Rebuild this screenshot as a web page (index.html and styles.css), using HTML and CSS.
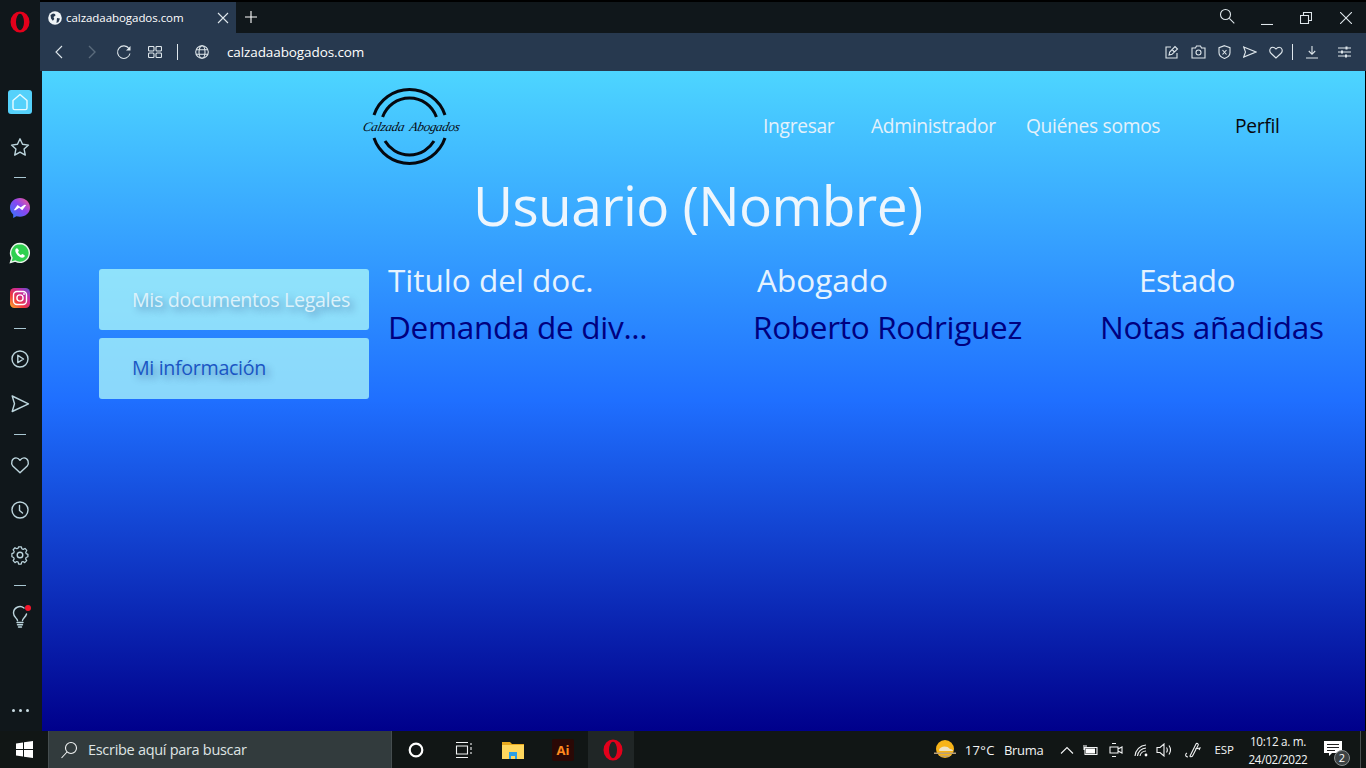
FILE: index.html
```html
<!DOCTYPE html>
<html lang="es">
<head>
<meta charset="utf-8">
<title>calzadaabogados.com</title>
<link rel="stylesheet" href="styles.css">
</head>
<body>
<div class="desktop">
  <div class="browser">
    <aside class="sidebar">
      <div class="side-opera">
        <svg width="20" height="22" viewBox="0 0 20 22"><path fill="#e3001b" fill-rule="evenodd" d="M10 .5a9.500 10.500 0 1 0 0 21 9.500 10.500 0 1 0 0-21zM10 2.700a4 8.300 0 1 1 0 16.600 4 8.300 0 1 1 0-16.600z"/></svg>
      </div>
      <div class="side-item"><span class="home-box"><svg width="20" height="20" viewBox="0 0 20 20"><path class="ln" d="M3 8.500 10 2.500l7 6V16a1.600 1.600 0 0 1-1.600 1.600H4.600A1.600 1.600 0 0 1 3 16z"/></svg></span></div>
      <div class="side-item"><svg width="20" height="20" viewBox="0 0 20 20"><path class="ln" d="M10 1.800 12.500 7.300l6 .8-4.400 4 1.200 6L10 15.100l-5.300 3 1.200-6-4.400-4 6-.8z"/></svg></div>
      <div class="side-dash"></div>
      <div class="side-item"><svg width="22" height="22" viewBox="0 0 22 22"><defs><linearGradient id="ms" x1="0" y1="1" x2="1" y2="0"><stop offset="0" stop-color="#2b7bff"/><stop offset=".55" stop-color="#8a46f0"/><stop offset="1" stop-color="#ff5a8a"/></linearGradient></defs><path fill="url(#ms)" d="M11 1C5.400 1 1 5.100 1 10.500c0 2.900 1.200 5.300 3.200 7V21l3.200-1.800c1.100.3 2.300.5 3.600.5 5.600 0 10-4 10-9.200S16.600 1 11 1z"/><path fill="#fff" d="m4.800 13.300 3.700-5.400 3.200 2.400 3.700-2.500 1.800.1-3.900 5.300-3.200-2.400-3.600 2.500z"/></svg></div>
      <div class="side-item"><svg width="22" height="22" viewBox="0 0 22 22"><path fill="#2fd04f" stroke="#e8f4ea" stroke-width="1.400" d="M11 1.500a9.400 9.400 0 0 0-8 14.300L1.500 20.500l4.800-1.400A9.400 9.400 0 1 0 11 1.500z"/><path fill="#fff" d="M7.800 6.200c-.5 0-1.500.8-1.500 2.300 0 3 3.900 7.200 7 7.200 1.500 0 2.500-1 2.500-1.900 0-.6-2-1.700-2.500-1.700-.5 0-.8 1-1.300 1-.9 0-3-2.100-3-3 0-.5.900-.8.900-1.300 0-.5-1.200-2.600-2.100-2.600z"/></svg></div>
      <div class="side-item"><svg width="20" height="20" viewBox="0 0 20 20"><defs><linearGradient id="ig" x1="0" y1="1" x2="1" y2="0"><stop offset="0" stop-color="#fdb52d"/><stop offset=".35" stop-color="#f0383f"/><stop offset=".7" stop-color="#c32aa3"/><stop offset="1" stop-color="#4f5bd5"/></linearGradient></defs><rect width="20" height="20" rx="4.500" fill="url(#ig)"/><rect x="3.500" y="3.500" width="13" height="13" rx="3.500" fill="none" stroke="#fff" stroke-width="1.400"/><circle cx="10" cy="10" r="3.100" fill="none" stroke="#fff" stroke-width="1.400"/><circle cx="14" cy="6" r=".9" fill="#fff"/></svg></div>
      <div class="side-dash"></div>
      <div class="side-item"><svg width="20" height="20" viewBox="0 0 20 20"><circle class="ln" cx="10" cy="10" r="8"/><path class="ln" d="m7.800 6.300 5.700 3.700-5.700 3.700z"/></svg></div>
      <div class="side-item"><svg width="20" height="20" viewBox="0 0 20 20"><path class="ln" d="M2.200 2 18.500 9.800 2.200 17.500l2.300-7.700z"/></svg></div>
      <div class="side-dash"></div>
      <div class="side-item"><svg width="20" height="20" viewBox="0 0 20 20"><path class="ln" d="M10 17.800 2.800 11C.6 8.500 1.700 2.900 6 2.900c1.800 0 3 1 4 2.300 1-1.300 2.200-2.300 4-2.300 4.300 0 5.400 5.600 3.200 8.100z"/></svg></div>
      <div class="side-item"><svg width="20" height="20" viewBox="0 0 20 20"><circle class="ln" cx="10" cy="10" r="8"/><path class="ln" d="M9.500 5.500v5l3 2.500"/></svg></div>
      <div class="side-item side-gear"><svg width="20" height="20" viewBox="0 0 20 20"><circle class="ln" cx="10" cy="10" r="2.800"/><path class="ln" d="m8.400 2h3.200l.5 2.300 1.500.7 2.100-1.100 2 2.300-1.200 2 .5 1.600 2 .8v2.800l-2.100.8-.5 1.600 1.200 2-2.200 2.200-2-1.200-1.500.7-.5 2.300H8.400l-.5-2.300-1.500-.7-2.100 1.200-2.100-2.200 1.200-2-.6-1.600-2-.8V9.800l2-.8.6-1.600-1.200-2 2.100-2.300 2.100 1.100 1.500-.7z" transform="translate(1.200 0) scale(.88)"/></svg></div>
      <div class="side-dash"></div>
      <div class="side-item bulb"><svg width="20" height="24" viewBox="0 0 20 24"><path class="ln" d="M7.500 15.500C7 13 3.500 12 3.500 8a6.500 6.500 0 0 1 10.500-5M12.500 15.500c.3-2 3.300-3.500 4-6.500M7 17.500h6M7.500 19.700h5M8.500 22h3"/></svg><span class="red-dot"></span></div>
      <div class="side-more"><i></i><i></i><i></i></div>
    </aside>
    <div class="main">
      <div class="tabstrip">
        <div class="tab">
          <svg width="14" height="14" viewBox="0 0 14 14"><circle cx="7" cy="7" r="6.800" fill="#eef3f6"/><path fill="#27394f" d="M2.500 4 5 2.500l2 .5.500 1.500-2 1.500.8 2-1.500 1.700L3 7.500zM9 7l3 .5-1.500 3.500-2 1z"/></svg>
          <span class="tab-title">calzadaabogados.com</span>
          <svg class="tab-x" width="12" height="12" viewBox="0 0 12 12"><path class="ln2" d="m1 1 10 10M11 1 1 11"/></svg>
        </div>
        <svg class="tab-new" width="12" height="12" viewBox="0 0 12 12"><path class="ln2 white" d="M6 0v12M0 6h12"/></svg>
        <div class="win-controls">
          <svg class="wc-search" width="16" height="16" viewBox="0 0 16 16"><circle class="ln2" cx="6.500" cy="6.500" r="5"/><path class="ln2" d="m10.300 10.300 5 5"/></svg>
          <svg class="wc-min" width="12" height="12" viewBox="0 0 12 12"><path class="ln2" d="M0 11.500h12"/></svg>
          <svg class="wc-max" width="12" height="12" viewBox="0 0 12 12"><path class="ln2" d="M.5 3.500h8v8h-8zM3.500 3.500v-3h8v8h-3"/></svg>
          <svg class="wc-close" width="12" height="12" viewBox="0 0 12 12"><path class="ln2" d="m0 0 12 12M12 0 0 12"/></svg>
        </div>
      </div>
      <div class="toolbar">
        <svg class="tb-back" width="10" height="14" viewBox="0 0 10 14"><path class="ln2" d="M8 1 2 7l6 6"/></svg>
        <svg class="tb-fwd" width="10" height="14" viewBox="0 0 10 14"><path class="ln2 dim" d="m2 1 6 6-6 6"/></svg>
        <svg class="tb-reload" width="15" height="15" viewBox="0 0 15 15"><path class="ln2" d="M13 3.500A6.300 6.300 0 1 0 14 8.500"/><path fill="#dfe7ec" d="M14.500 1v4.500H10z"/></svg>
        <svg class="tb-grid" width="14" height="12" viewBox="0 0 14 12"><rect class="ln2" x=".5" y=".5" width="5.500" height="4.500" rx="1"/><rect class="ln2" x="8" y=".5" width="5.500" height="4.500" rx="1"/><rect class="ln2" x=".5" y="7" width="5.500" height="4.500" rx="1"/><rect class="ln2" x="8" y="7" width="5.500" height="4.500" rx="1"/></svg>
        <span class="tb-sep"></span>
        <svg class="tb-globe" width="14" height="14" viewBox="0 0 14 14"><circle class="ln2" cx="7" cy="7" r="6.300"/><ellipse class="ln2" cx="7" cy="7" rx="3" ry="6.300"/><path class="ln2" d="M1 4.700h12M1 9.300h12"/></svg>
        <span class="address">calzadaabogados.com</span>
        <div class="tb-right">
          <svg width="14" height="14" viewBox="0 0 14 14"><path class="ln2" d="M6 2H1v11h11V8"/><path class="ln2" d="m4 10 .7-3L10 1.500l2.500 2.500L7 9.300zM7 4.500 9.500 7"/></svg>
          <svg width="15" height="14" viewBox="0 0 15 14"><path class="ln2" d="M1 3h3.500l1-2h4l1 2H14v10H1z"/><circle class="ln2" cx="7.500" cy="7.500" r="2.500"/></svg>
          <svg width="13" height="14" viewBox="0 0 13 14"><path class="ln2" d="M6.500.7 12 2.700v5c0 3-2.800 4.800-5.500 5.700C3.800 12.500 1 10.700 1 7.700v-5z"/><path class="ln2" d="m4.500 5 4 4.500M8.500 5l-4 4.500"/></svg>
          <svg width="14" height="12" viewBox="0 0 14 12"><path class="ln2" d="M.7 1 13 6 .7 11 2.500 6z"/></svg>
          <svg width="14" height="13" viewBox="0 0 14 13"><path class="ln2" d="M7 12 1.700 7C0 5 .8 1.200 3.800 1.200 5.300 1.200 6.200 2 7 3c.8-1 1.700-1.800 3.200-1.800 3 0 3.800 3.800 2.100 5.800z"/></svg>
          <span class="tb-sep2"></span>
          <svg class="tb-dl" width="14" height="14" viewBox="0 0 14 14"><path class="ln2" d="M7 1v8M3.800 6 7 9.300 10.200 6M1 13h12"/></svg>
          <svg class="tb-set" width="13" height="12" viewBox="0 0 13 12"><path class="ln2" d="M0 2h13M0 6h13M0 10h13"/><path class="ln2 thick" d="M8.500 .5v3M4 4.500v3M8 8.500v3"/></svg>
        </div>
      </div>
      <main class="page">
        <header class="site-header">
          <div class="logo">
            <svg class="logo-rings" width="94" height="78" viewBox="0 0 94 78">
              <path class="ring" d="M11 27A37.500 37.500 0 0 1 82 27"/>
              <path class="ring" d="M19.600 29A28.500 28.500 0 0 1 73.400 29"/>
              <path class="ring" d="M11 50A37.500 37.500 0 0 0 82 50"/>
              <path class="ring" d="M22 53A28.500 28.500 0 0 0 71 53"/>
            </svg>
            <span class="logo-text">Calzada Abogados</span>
          </div>
          <nav class="nav">
            <a class="nav-link">Ingresar</a>
            <a class="nav-link">Administrador</a>
            <a class="nav-link">Quiénes somos</a>
            <a class="nav-link dark">Perfil</a>
          </nav>
        </header>
        <h1 class="title">Usuario (Nombre)</h1>
        <section class="content">
          <div class="menu">
            <a class="menu-btn light">Mis documentos Legales</a>
            <a class="menu-btn blue">Mi información</a>
          </div>
          <div class="docs">
            <div class="th th-a">Titulo del doc.</div>
            <div class="th th-b">Abogado</div>
            <div class="th th-c">Estado</div>
            <div class="td">Demanda de div...</div>
            <div class="td">Roberto Rodriguez</div>
            <div class="td">Notas añadidas</div>
          </div>
        </section>
      </main>
    </div>
  </div>
  <footer class="taskbar">
    <svg class="start" width="17" height="17" viewBox="0 0 17 17"><path fill="#fff" d="M0 2.500 7 1.500V8H0zM8 1.300 17 0v8H8zM0 9h7v6.500L0 14.500zM8 9h9v8l-9-1.300z"/></svg>
    <div class="search">
      <svg width="18" height="18" viewBox="0 0 18 18"><circle class="ln3" cx="11" cy="7" r="5.500"/><path class="ln3" d="M7 11 1.500 17"/></svg>
      <span>Escribe aquí para buscar</span>
    </div>
    <div class="apps">
      <span class="app"><svg width="16" height="16" viewBox="0 0 16 16"><circle cx="8" cy="8" r="6.300" fill="none" stroke="#fff" stroke-width="2.200"/></svg></span>
      <span class="app"><svg width="18" height="16" viewBox="0 0 18 16"><path class="ln3" d="M1 .5h12M1 15.500h12M1.500 4h11v8h-11z"/><path class="ln3" d="M16 1v2M16 5v3M16 10v2"/></svg></span>
      <span class="app wide"><svg width="22" height="18" viewBox="0 0 22 18"><path fill="#e8a91e" d="M0 1h8l2 2h12v15H0z"/><path fill="#ffd75e" d="M0 4h22v14H0z"/><path fill="#2b9fe6" d="M7 11h8v7h-2v-3H9v3H7z"/></svg></span>
      <span class="app wide"><span class="ai">Ai</span></span>
      <span class="app active"><svg width="20" height="22" viewBox="0 0 20 22"><path fill="#e3001b" fill-rule="evenodd" d="M10 .5a9.500 10.500 0 1 0 0 21 9.500 10.500 0 1 0 0-21zM10 2.700a4 8.300 0 1 1 0 16.600 4 8.300 0 1 1 0-16.600z"/></svg></span>
    </div>
    <div class="tray">
      <svg class="weather" width="24" height="20" viewBox="0 0 24 20"><circle cx="12" cy="9" r="9" fill="#f7b418"/><path fill="#efe3c4" d="M6 10c1-4 8-5 11-1 2 0 3 1 3 2H8c-1 0-2 0-2-1z"/><path fill="#b9a07a" d="M1 12.500h22V14H1zM6 15.500h12c-2 2-9 2-12 0z"/></svg>
      <span class="temp">17°C</span>
      <span class="cond">Bruma</span>
      <svg class="t-up" width="14" height="8" viewBox="0 0 14 8"><path class="ln3" d="m1 7.500 6-6 6 6"/></svg>
      <svg class="t-bat" width="16" height="12" viewBox="0 0 16 12"><path class="ln3" d="M3 3.500h12v7H3zM2 1v5M4 1v3"/><path fill="#fff" d="M4 4.500h9v5H4z"/></svg>
      <svg class="t-cam" width="14" height="16" viewBox="0 0 14 16"><path class="ln3" d="M1 5h8v6H1zM9 7l4-2v6l-4-2M3 1.500h4M3 14.500h4"/></svg>
      <svg class="t-wifi" width="14" height="14" viewBox="0 0 14 14"><path class="ln3" d="M1 13A12 12 0 0 1 12 2M3.500 13A9 9 0 0 1 12 5M6 13A6 6 0 0 1 12 8"/><circle cx="12" cy="12" r="1.400" fill="#fff"/></svg>
      <svg class="t-vol" width="17" height="14" viewBox="0 0 17 14"><path class="ln3" d="M1 4.500h3L8 1v12L4 9.500H1zM10.500 4.500c1 1.500 1 3.500 0 5M13 2.500c2 3 2 6 0 9"/></svg>
      <svg class="t-pen" width="18" height="16" viewBox="0 0 18 16"><path class="ln3" d="M4 15c-3 0-3-3-1-4M6 14 12 2c1-1.500 3 0 2 1.500L8.500 14c-.5 1-2.800 1-2.500 0zM11 7l5-1-1 2"/></svg>
      <span class="lang">ESP</span>
      <div class="clock"><span>10:12 a. m.</span><span>24/02/2022</span></div>
      <span class="notif">
        <svg width="18" height="15" viewBox="0 0 18 15"><path fill="#fff" d="M0 0h18v12H8l-3 3v-3H0z"/><path stroke="#222" d="M3 3.500h12M3 6.500h12M3 9.500h8"/></svg>
        <b class="badge">2</b>
      </span>
      <span class="desk-line"></span>
    </div>
  </footer>
</div>
</body>
</html>
```
FILE: styles.css
```css
* { box-sizing: border-box; }
html, body { margin: 0; height: 100%; overflow: hidden; background: #000; }
body { font-family: "Open Sans", "Noto Sans", sans-serif; }
svg { display: block; flex: none; }
.ln { fill: none; stroke: #bcd5dd; stroke-width: 1.4; stroke-linejoin: round; stroke-linecap: round; }
.ln2 { fill: none; stroke: #dfe7ec; stroke-width: 1.1; }
.ln2.white { stroke: #fff; stroke-width: 1.1; }
.ln2.dim { stroke: #5a6b7c; stroke-width: 1.4; }
.ln2.thick { stroke-width: 2; }
.ln3 { fill: none; stroke: #f2f4f4; stroke-width: 1.1; }

.desktop { width: 1366px; height: 768px; display: flex; flex-direction: column; }
.browser { flex: 1; display: flex; min-height: 0; }

.sidebar { width: 40px; background: #10171b; display: flex; flex-direction: column; align-items: center; }
.side-opera { height: 44px; margin-bottom: 35px; display: flex; align-items: center; justify-content: center; }
.side-item { height: 45px; width: 100%; display: flex; align-items: center; justify-content: center; position: relative; }
.side-dash { height: 16px; width: 100%; display: flex; align-items: center; justify-content: center; }
.side-dash::before { content: ""; width: 12px; height: 1px; background: #a9c7d2; }
.home-box { width: 24px; height: 24px; border-radius: 3px; background: #55d1fb; display: flex; align-items: center; justify-content: center; }
.home-box .ln { stroke: #e8fbff; }
.bulb { margin-top: 1px; }
.red-dot { position: absolute; width: 6px; height: 6px; border-radius: 50%; background: #f4162c; left: 25px; top: 11px; }
.side-more { margin-top: auto; height: 41px; display: flex; align-items: center; gap: 4px; }
.side-more i { width: 3px; height: 3px; border-radius: 50%; background: #c9dbe2; }

.main { flex: 1; display: flex; flex-direction: column; min-width: 0; padding-top: 2px; }
.tabstrip { height: 31px; background: #10171b; display: flex; align-items: center; }
.tab { width: 196px; height: 31px; background: #27394f; display: flex; align-items: center; padding-left: 8px; }
.tab-title { margin-left: 4px; font-size: 11.500px; color: #fff; flex: 1; letter-spacing: -.05px; white-space: nowrap; }
.tab-x { margin-right: 7px; }
.tab-new { margin-left: 9px; margin-top: -1px; }
.win-controls { margin-left: auto; display: flex; align-items: center; height: 100%; }
.wc-search { margin-right: 26px; margin-top: -4px; }
.wc-min { margin-right: 27px; margin-top: 2px; }
.wc-max { margin-right: 28px; }
.wc-close { margin-right: 14px; }

.toolbar { height: 38px; background: #27394f; display: flex; align-items: center; }
.tb-back { margin-left: 14px; }
.tb-fwd { margin-left: 23px; }
.tb-reload { margin-left: 19px; }
.tb-grid { margin-left: 17px; }
.tb-sep { width: 1px; height: 16px; background: #dfe7ec; margin-left: 15px; }
.tb-globe { margin-left: 17px; }
.address { margin-left: 18px; font-size: 13.500px; color: #fff; letter-spacing: -.1px; white-space: nowrap; }
.tb-right { margin-left: auto; display: flex; align-items: center; gap: 12px; padding-right: 15px; }
.tb-sep2 { width: 1px; height: 16px; background: #dfe7ec; margin: 0 0 0 -3px; }
.tb-dl { margin-left: 0; }
.tb-set { margin-left: 7px; }

.page { flex: 1; min-height: 0; margin-right: 1px; border-left: 2px solid #10171b; background: linear-gradient(#4dd5ff 0%, #1f6fff 50%, #00008b 100%); padding-top: 17px; }
.site-header { display: flex; height: 78px; padding-left: 321px; }
.logo { width: 94px; height: 78px; position: relative; flex: none; }
.ring { fill: none; stroke: #05080f; stroke-width: 3; }
.logo-text { position: absolute; left: 0; top: 30px; width: 94px; text-align: center; font-family: "Liberation Serif", serif; font-style: italic; font-size: 13px; line-height: 18px; color: #05080f; white-space: nowrap; letter-spacing: -.3px; word-spacing: 3px; transform: skewX(-12deg); }
.nav { margin-left: 306px; display: grid; grid-template-columns: 108px 155px 209px auto; padding-top: 25px; }
.nav-link { font-size: 19.200px; line-height: 26px; color: #e4f1fb; white-space: nowrap; letter-spacing: -.3px; }
.nav-link.dark { color: #07070d; }

.title { margin: 3px 0 0; padding-left: 431px; font-weight: 400; font-size: 55px; line-height: 72px; color: #eef6fd; letter-spacing: -.6px; white-space: nowrap; }
.content { display: flex; margin-top: 28px; padding-left: 57px; }
.menu { width: 270px; display: flex; flex-direction: column; gap: 8px; }
.menu-btn { height: 61px; border-radius: 3px; background: rgba(180, 255, 250, .72); display: flex; align-items: center; padding-left: 33px; font-size: 19.700px; white-space: nowrap; text-shadow: 4px 4px 7px rgba(0, 0, 80, .35); letter-spacing: -.35px; }
.menu-btn.light { color: #dcf2fb; }
.menu-btn.blue { color: #1a56c4; padding-bottom: 2px; }
.docs { margin-left: 19px; display: grid; grid-template-columns: 365px 347px 1fr; grid-auto-rows: 47px; align-content: start; flex: 1; }
.th { font-size: 31.500px; line-height: 22px; color: #e6f3fe; white-space: nowrap; letter-spacing: 0; }
.td { font-size: 31.500px; line-height: 22px; color: #00007f; white-space: nowrap; letter-spacing: -.3px; }
.th-b { padding-left: 4px; }
.th-c { padding-left: 39px; letter-spacing: -.6px; }

.taskbar { height: 37px; background: #111615; display: flex; align-items: center; color: #f2f4f4; }
.start { margin-left: 16px; }
.search { margin-left: 15px; width: 344px; height: 37px; background: #323b3d; border-left: 1px solid #454d4f; border-right: 1px solid #454d4f; display: flex; align-items: center; padding-left: 11px; font-size: 14.500px; letter-spacing: -.3px; }
.search span { margin-left: 10px; white-space: nowrap; color: #dfe4e4; }
.apps { display: flex; height: 100%; }
.app { width: 48px; height: 37px; display: flex; align-items: center; justify-content: center; }
.app.wide { width: 50px; }
.app.active { width: 46px; background: #202626; padding-left: 3px; }
.ai { width: 22px; height: 22px; background: #2a0805; border-radius: 2px; color: #ff8a1e; font-size: 13px; font-weight: 700; text-align: center; line-height: 22px; }
.tray { margin-left: auto; display: flex; align-items: center; height: 100%; font-size: 13px; padding-right: 5px; }
.temp { margin-left: 8px; letter-spacing: .4px; }
.cond { margin-left: 9px; letter-spacing: -.3px; }
.t-up { margin-left: 17px; }
.t-bat { margin-left: 8px; }
.t-cam { margin-left: 11px; }
.t-wifi { margin-left: 11px; }
.t-vol { margin-left: 8px; }
.t-pen { margin-left: 11px; }
.lang { margin-left: 12px; font-size: 11.500px; }
.clock { margin-left: 13px; width: 62px; display: flex; flex-direction: column; align-items: center; font-size: 11.700px; line-height: 18px; letter-spacing: -.3px; white-space: nowrap; }
.notif { margin-left: 15px; width: 24px; height: 30px; position: relative; display: flex; padding-top: 6px; }
.badge { position: absolute; right: -2px; bottom: -1px; width: 16px; height: 16px; border-radius: 50%; background: #3c4243; border: 1px solid #8a9090; color: #fff; font-size: 11px; font-weight: 400; line-height: 14px; text-align: center; }
.desk-line { margin-left: 12px; width: 1px; height: 100%; background: #4a5050; }
```
